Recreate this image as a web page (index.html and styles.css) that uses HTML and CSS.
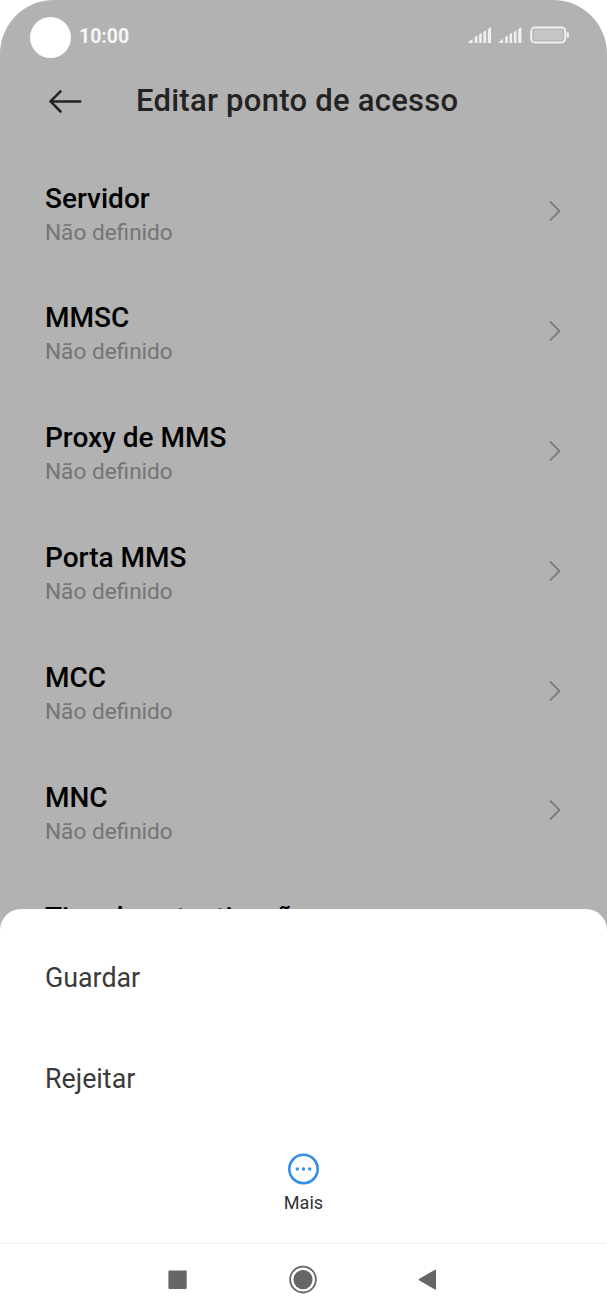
FILE: index.html
```html
<!DOCTYPE html>
<html lang="pt">
<head>
<meta charset="utf-8">
<title>Editar ponto de acesso</title>
<link rel="stylesheet" href="styles.css">
</head>
<body>
<div class="phone">
  <div class="screen">
    <div class="status">
      <span class="camera"></span>
      <span class="clock">10:00</span>
      <svg class="indicators" width="102" height="20" viewBox="0 0 102 20">
        <g fill="#f0f0f0">
          <path id="signal" d="M.6 18V16.9L4.6 13.7V18ZM6.7 18V12.1L9.4 10.5V18ZM11.1 18V9.5L13.7 7.7V18ZM15.4 18V7.1L18.1 5.5V18ZM19.8 18V4.3L23 1.9V18Z"/>
          <use href="#signal" x="30.4"/>
          <path d="M98.6 7.2h1q1.3 0 1.3 1.3v3q0 1.3-1.3 1.3h-1z"/>
        </g>
        <rect x="63.2" y="2.6" width="34" height="14.8" rx="3.8" fill="none" stroke="#f0f0f0" stroke-width="2"/>
        <rect x="65.4" y="4.8" width="29.6" height="10.4" rx="2" fill="#c5c5c5"/>
      </svg>
    </div>
    <header class="header">
      <svg class="back" width="34" height="24" viewBox="0 0 34 24" fill="none" stroke="#232323" stroke-width="2.5" stroke-linecap="round" stroke-linejoin="round"><path d="M32.3 12.4H2.5M12.5 2.3L2.5 12.4l10 10.1"/></svg>
      <h1 class="heading">Editar ponto de acesso</h1>
    </header>
    <main class="list">
      <div class="row"><div><div class="name">Servidor</div><div class="value">Não definido</div></div><svg class="chevron" viewBox="0 0 14 22"><path d="M2 1.5L11.5 11L2 20.5"/></svg></div>
      <div class="row"><div><div class="name">MMSC</div><div class="value">Não definido</div></div><svg class="chevron" viewBox="0 0 14 22"><path d="M2 1.5L11.5 11L2 20.5"/></svg></div>
      <div class="row"><div><div class="name">Proxy de MMS</div><div class="value">Não definido</div></div><svg class="chevron" viewBox="0 0 14 22"><path d="M2 1.5L11.5 11L2 20.5"/></svg></div>
      <div class="row"><div><div class="name">Porta MMS</div><div class="value">Não definido</div></div><svg class="chevron" viewBox="0 0 14 22"><path d="M2 1.5L11.5 11L2 20.5"/></svg></div>
      <div class="row"><div><div class="name">MCC</div><div class="value">Não definido</div></div><svg class="chevron" viewBox="0 0 14 22"><path d="M2 1.5L11.5 11L2 20.5"/></svg></div>
      <div class="row"><div><div class="name">MNC</div><div class="value">Não definido</div></div><svg class="chevron" viewBox="0 0 14 22"><path d="M2 1.5L11.5 11L2 20.5"/></svg></div>
      <div class="row"><div><div class="name">Tipo de autenticação</div></div></div>
    </main>
  </div>
  <section class="sheet">
    <div class="option">Guardar</div>
    <div class="option">Rejeitar</div>
    <div class="more">
      <svg width="32" height="32" viewBox="0 0 32 32"><circle cx="15.5" cy="16" r="14.2" fill="none" stroke="#318ee6" stroke-width="2.6"/><g fill="#318ee6"><circle cx="9.3" cy="16" r="1.7"/><circle cx="15.5" cy="16" r="1.7"/><circle cx="21.7" cy="16" r="1.7"/></g></svg>
      <span class="more-label">Mais</span>
    </div>
    <nav class="nav">
      <svg width="20" height="20" viewBox="0 0 20 20"><rect x="1.4" y=".6" width="18.3" height="18.3" rx="1" fill="#666"/></svg>
      <svg width="30" height="30" viewBox="0 0 30 30"><circle cx="16" cy="14.6" r="12.9" fill="none" stroke="#666" stroke-width="1.8"/><circle cx="16" cy="14.6" r="9.6" fill="#666"/></svg>
      <svg width="20" height="22" viewBox="0 0 20 22"><path d="M2.3 10.7L18.3 1.4V20Z" fill="#666" stroke="#666" stroke-width="1.4" stroke-linejoin="round"/></svg>
    </nav>
  </section>
</div>
</body>
</html>
```

FILE: styles.css
```css
* { box-sizing: border-box; }

body {
  margin: 0;
  background: #fff;
  font-family: Roboto, sans-serif;
}

.phone {
  position: relative;
  width: 607px;
  height: 1316px;
  overflow: hidden;
}

.screen {
  height: 940px;
  overflow: hidden;
  background: #b2b2b2;
  border-radius: 54px 54px 0 0;
}

.status {
  display: flex;
  align-items: flex-start;
  height: 70px;
  padding: 17.4px 37px 0 30.3px;
}

.camera {
  width: 41px;
  height: 41px;
  border-radius: 50%;
  background: #fff;
}

.clock {
  margin: 7.4px auto 0 7.7px;
  font-size: 19.5px;
  font-weight: 700;
  line-height: 24px;
  color: #f5f5f5;
}

.indicators { margin-top: 7.6px; }

.header {
  display: flex;
  align-items: center;
  gap: 54px;
  height: 62px;
  padding-left: 48px;
}

.heading {
  margin: 0;
  font-size: 31px;
  font-weight: 500;
  line-height: 40px;
  letter-spacing: 0.26px;
  color: #232323;
  white-space: nowrap;
}

.list { padding: 19.6px 45px 0; }

.row {
  display: flex;
  align-items: center;
  justify-content: space-between;
  height: 119.8px;
}

.row > div { padding-top: 8.2px; min-height: 76.2px; }

.row:last-child { padding-top: 0.8px; }

.name {
  font-size: 28px;
  font-weight: 500;
  line-height: 34px;
  color: #000;
}

.value {
  font-size: 22.6px;
  line-height: 34px;
  color: #757575;
}

.chevron {
  width: 14px;
  height: 22px;
  fill: none;
  stroke: #7c7c7c;
  stroke-width: 1.8;
}

.sheet {
  position: absolute;
  inset: 909px 0 0;
  padding-top: 19px;
  border-radius: 21px 21px 0 0;
  background: #fff;
}

.option {
  height: 101px;
  padding-left: 45px;
  font-size: 26.8px;
  line-height: 101px;
  color: #3a3a3a;
}

.more {
  display: flex;
  flex-direction: column;
  align-items: center;
  gap: 6px;
  height: 113px;
  padding-top: 23px;
}

.more-label {
  font-size: 18.1px;
  line-height: 24px;
  color: #333;
}

.nav {
  display: flex;
  align-items: center;
  justify-content: space-between;
  height: 73px;
  padding: 0 170px 0 167px;
  border-top: 1px solid #eee;
}
```
